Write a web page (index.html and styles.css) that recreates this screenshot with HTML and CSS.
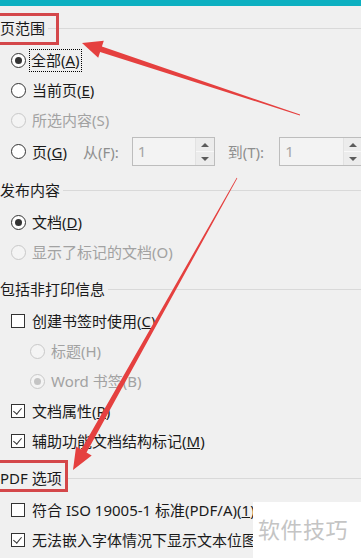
FILE: index.html
```html
<!DOCTYPE html>
<html lang="zh-CN">
<head>
    <meta charset="UTF-8">
    <meta name="viewport" content="width=device-width, initial-scale=1.0">
    <title>发布为 PDF 选项</title>
    <link rel="stylesheet" href="styles.css">
</head>
<body>
    <div class="titlebar"></div>

    <div class="dialog">
        <!-- 页范围 -->
        <section class="group">
            <div class="group-title"><span class="marked">页范围</span><i class="rule"></i></div>
            <label class="opt"><span class="radio checked"></span><span class="text focus">全部(<u>A</u>)</span></label>
            <label class="opt"><span class="radio"></span><span class="text">当前页(<u>E</u>)</span></label>
            <label class="opt disabled"><span class="radio"></span><span class="text">所选内容(S)</span></label>
            <div class="opt range-row">
                <span class="radio"></span><span class="text">页(<u>G</u>)</span>
                <span class="range-label from">从(F):</span>
                <div class="spin first">
                    <span class="spin-value">1</span>
                    <span class="spin-btns"><b class="up"></b><b class="down"></b></span>
                </div>
                <span class="range-label to">到(T):</span>
                <div class="spin last">
                    <span class="spin-value">1</span>
                    <span class="spin-btns"><b class="up"></b><b class="down"></b></span>
                </div>
            </div>
        </section>

        <!-- 发布内容 -->
        <section class="group">
            <div class="group-title"><span>发布内容</span><i class="rule"></i></div>
            <label class="opt"><span class="radio checked"></span><span class="text">文档(<u>D</u>)</span></label>
            <label class="opt disabled"><span class="radio"></span><span class="text">显示了标记的文档(O)</span></label>
        </section>

        <!-- 包括非打印信息 -->
        <section class="group">
            <div class="group-title"><span>包括非打印信息</span><i class="rule"></i></div>
            <label class="opt"><span class="check"></span><span class="text">创建书签时使用(<u>C</u>)</span></label>
            <label class="opt sub disabled"><span class="radio"></span><span class="text">标题(H)</span></label>
            <label class="opt sub disabled"><span class="radio checked"></span><span class="text">Word 书签(B)</span></label>
            <label class="opt"><span class="check checked"></span><span class="text">文档属性(<u>R</u>)</span></label>
            <label class="opt"><span class="check checked"></span><span class="text">辅助功能文档结构标记(<u>M</u>)</span></label>
        </section>

        <!-- PDF 选项 -->
        <section class="group">
            <div class="group-title"><span class="marked alt">PDF 选项</span><i class="rule"></i></div>
            <label class="opt clipped"><span class="check"></span><span class="text">符合 ISO 19005-1 标准(PDF/A)(<u>1</u>)</span></label>
            <label class="opt clipped"><span class="check checked"></span><span class="text">无法嵌入字体情况下显示文本位图(<u>X</u>)</span></label>
        </section>
    </div>

    <!-- Annotation arrows drawn over the dialog -->
    <svg class="arrows" width="361" height="558" viewBox="0 0 361 558">
        <polygon points="82,43 103.8,40.7 101.9,46.6 300.1,114.6 299.9,115.4 100.1,51.9 98.2,57.8" />
        <polygon points="73,470 76.1,446.4 81.3,449.4 236.7,177.8 237.3,178.2 86.5,452.4 91.7,455.4" />
    </svg>

    <div class="watermark">软件技巧</div>
</body>
</html>
```

FILE: styles.css
```css
/* General Styles */
html, body {
    margin: 0;
    padding: 0;
    width: 361px;
    height: 558px;
    overflow: hidden;
}

body {
    position: relative;
    background-color: #f0f0f0;
    color: #1a1a1a;
    font-family: "Noto Sans", "Noto Sans CJK SC", sans-serif;
    font-size: 15px;
}

.titlebar {
    height: 6px;
    background-color: #0db0c1;
}

.dialog {
    padding-top: 11px;
}

.group + .group {
    margin-top: 11px;
}

/* Group headers with the thin rule to the right */
.group-title {
    display: flex;
    align-items: center;
    height: 22px;
    line-height: 22px;
    margin-bottom: 6px;
    white-space: nowrap;
}

.group-title .rule {
    flex: 1;
    height: 1px;
    margin-left: 3px;
    background-color: #d9d9d9;
}

/* Red annotation boxes round a header */
.marked {
    position: relative;
}

.marked::before {
    content: "";
    position: absolute;
    left: -10px;
    right: -14px;
    top: -4px;
    bottom: -6px;
    border: 3px solid #d4474a;
}

.marked.alt::before {
    right: -6px;
    top: -7px;
    bottom: -3px;
}

/* Option rows */
.opt {
    display: flex;
    align-items: center;
    height: 30px;
    padding-left: 11px;
    white-space: nowrap;
}

.opt.sub {
    padding-left: 30px;
}

.opt .text {
    margin-left: 6px;
    line-height: 22px;
}

.opt .text.focus {
    margin-left: 4px;
    padding: 0 1px;
    line-height: 21px;
    outline: 1px dotted #000;
}

.opt.disabled .text {
    color: #a2a2a2;
}

/* the watermark sits over the end of these rows */
.opt.clipped .text {
    max-width: 221px;
    overflow: hidden;
}

.radio {
    position: relative;
    width: 15px;
    height: 15px;
    box-sizing: border-box;
    border: 1px solid #333;
    border-radius: 50%;
    background: #fff;
    flex-shrink: 0;
}

.radio.checked::after {
    content: "";
    position: absolute;
    left: 3px;
    top: 3px;
    width: 7px;
    height: 7px;
    border-radius: 50%;
    background: #333;
}

.disabled .radio {
    border-color: #c8c8c8;
    background: #f4f4f4;
}

.disabled .radio.checked::after {
    background: #c4c4c4;
}

.check {
    position: relative;
    width: 14px;
    height: 14px;
    margin-right: 1px;
    box-sizing: border-box;
    border: 1px solid #333;
    background: #fff;
    flex-shrink: 0;
}

.check.checked::after {
    content: "";
    position: absolute;
    left: 3px;
    top: 1px;
    width: 4px;
    height: 7px;
    border-right: 1.3px solid #333;
    border-bottom: 1.3px solid #333;
    transform: rotate(40deg);
}

/* Page range row with the two spin boxes */
.range-row {
    height: 33px;
}

.range-label {
    color: #8e8e8e;
    line-height: 22px;
}

.range-label.from {
    margin-left: 16px;
}

.range-label.to {
    margin-left: 13px;
}

.spin {
    display: flex;
    height: 29px;
    width: 83px;
    box-sizing: border-box;
    border: 1px solid #bdbdbd;
    background: #f3f3f3;
    flex-shrink: 0;
}

.spin.first {
    margin-left: 13px;
}

.spin.last {
    margin-left: 15px;
    width: 84px;
}

.spin-value {
    flex: 1;
    padding-left: 5px;
    line-height: 27px;
    color: #a5a5a5;
}

.spin-btns {
    display: flex;
    flex-direction: column;
    width: 18px;
    border-left: 1px solid #e2e2e2;
}

.spin-btns b {
    flex: 1;
    display: flex;
    align-items: center;
    justify-content: center;
    background: #ececec;
}

.spin-btns b + b {
    border-top: 1px solid #f8f8f8;
}

.spin-btns b::after {
    content: "";
    width: 0;
    height: 0;
    border-left: 4px solid transparent;
    border-right: 4px solid transparent;
}

.spin-btns .up::after {
    border-bottom: 4px solid #5c5c5c;
}

.spin-btns .down::after {
    border-top: 4px solid #5c5c5c;
}

/* Overlays: arrows and the corner watermark */
.arrows {
    position: absolute;
    left: 0;
    top: 0;
    pointer-events: none;
}

.arrows polygon {
    fill: #e5403f;
}

.watermark {
    position: absolute;
    left: 253px;
    top: 502px;
    right: 0;
    bottom: 0;
    background: #fff;
    color: #c4c4c4;
    font-family: "Noto Sans CJK SC", sans-serif;
    font-size: 22px;
    line-height: 52px;
    padding-left: 5px;
    letter-spacing: 0.5px;
    white-space: nowrap;
}
```
